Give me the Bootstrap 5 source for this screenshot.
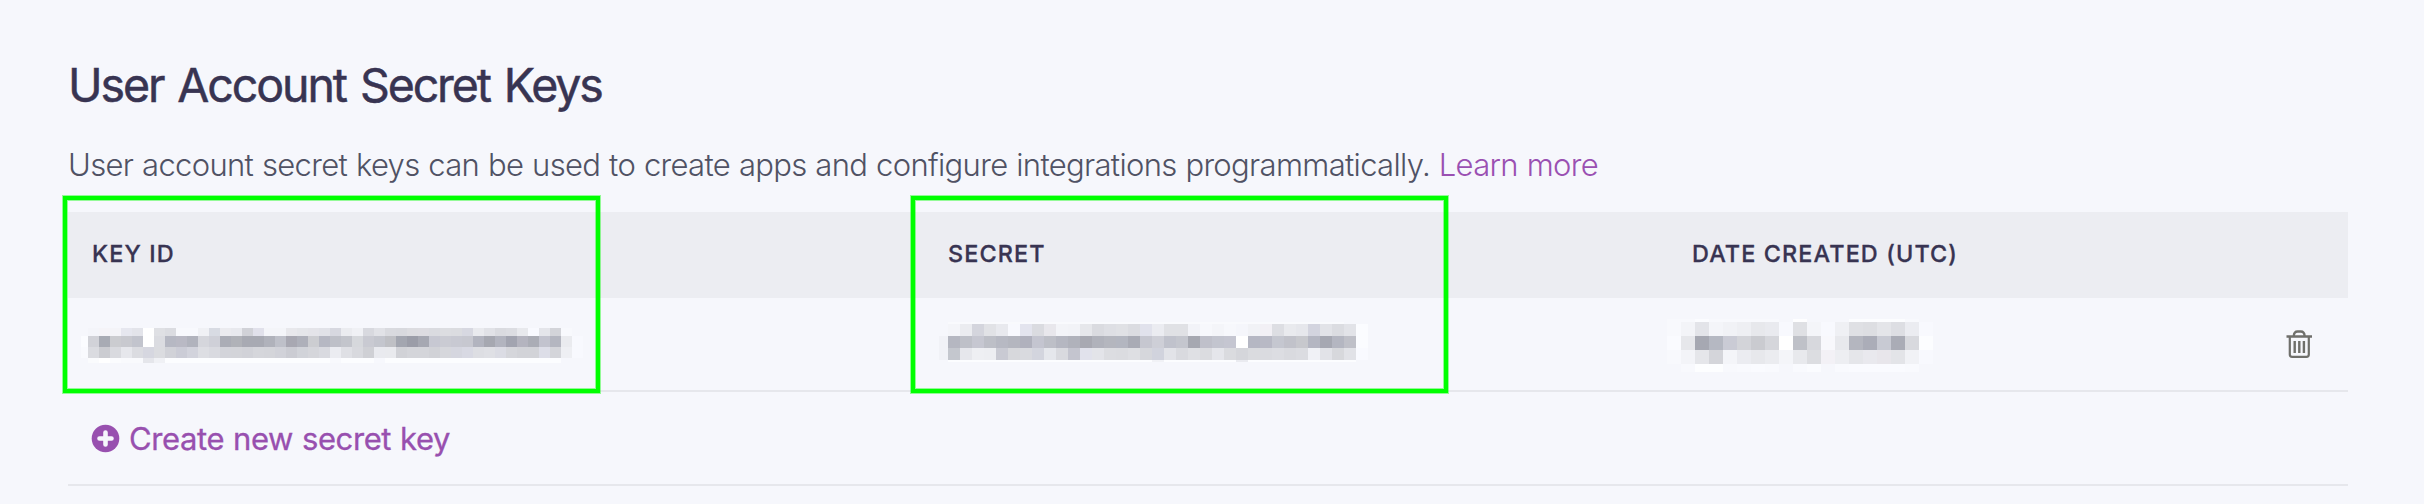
<!DOCTYPE html>
<html lang="en">
<head>
<meta charset="utf-8">
<title>User Account Secret Keys</title>
<link href="https://cdn.jsdelivr.net/npm/bootstrap@5.3.0/dist/css/bootstrap.min.css" rel="stylesheet">
<style>
body{background:#f6f7fc;color:#383452;font-family:Inter,"Liberation Sans",sans-serif;overflow:hidden;font-kerning:normal}
.page{padding:57px 76px 0 68px;height:504px}
.page-title{font-size:46.5px;line-height:56px;font-weight:400;letter-spacing:-2.1px;word-spacing:3px;white-space:nowrap;-webkit-text-stroke:.5px #383452}
.intro{font-size:31px;line-height:40px;font-weight:300;letter-spacing:-.67px;word-spacing:.75px;color:#505264;white-space:nowrap;margin:32px 0 27px}
.intro a{color:#9a50b2}
.keys{position:relative}
.keys-row{display:grid;grid-template-columns:856px 744px 572px 108px}
.keys-head{background:#ecedf2;height:86px;align-items:center;font-size:23.4px;font-weight:500;letter-spacing:1.12px;line-height:28px;-webkit-text-stroke:.3px #383452}
.keys-head>div{padding:0 0 2px 24px}
.keys-body{height:94px;border-bottom:2px solid #e6e7ec}
.keys-add{height:94px;border-bottom:2px solid #e6e7ec;padding-left:23px;gap:9px;color:#9850af;font-size:31px;line-height:40px;letter-spacing:-.4px;word-spacing:.6px;-webkit-text-stroke:.3px #9850af}
.keys-add span{padding-top:2px}
.mosaic{display:grid}
.m-key{grid-template-columns:7px repeat(45,11px);grid-template-rows:8px 11px 11px 5px;margin:30px 0 0 13px}
.m-secret{grid-template-columns:9px repeat(35,12px);grid-template-rows:2px 12px 12px 12px 2px;margin:24px 0 0 15px}
.m-date{grid-template-columns:repeat(19,14px);grid-template-rows:3px 14px 14px 14px 8px;margin:21px 0 0 -1px}
.frame{position:absolute;top:-16px;height:197px;border:4px solid #0f0;box-shadow:0 0 0 1px rgba(0,255,0,.4),inset 0 0 0 1px rgba(0,255,0,.4)}
.frame-key{left:-5px;width:537px}
.frame-secret{left:843px;width:537px}
.trash{margin:30px 0 0 45px}
</style>
</head>
<body>
<main class="page">
<h1 class="page-title mb-0">User Account Secret Keys</h1>
<p class="intro">User account secret keys can be used to create apps and configure integrations programmatically. <a href="#" class="text-decoration-none">Learn more</a></p>
<section class="keys">
<div class="keys-row keys-head"><div>KEY ID</div><div>SECRET</div><div>DATE CREATED (UTC)</div><div></div></div>
<div class="keys-row keys-body">
<div><div class="mosaic m-key" id="key"></div></div>
<div><div class="mosaic m-secret" id="secret"></div></div>
<div><div class="mosaic m-date" id="date"></div></div>
<div><svg class="d-block trash" width="28" height="32" viewBox="0 0 28 32" fill="none" stroke="#6f6f6b" stroke-width="2.2"><path d="M1.500 8.500H27M8.700 8C9 5 10.500 3.500 12.500 3.500h3.400c2 0 3.500 1.500 3.800 4.500" stroke-width="2.300"/><path d="M4.800 8.500V26.500q0 2.300 2.300 2.300H21.500q2.300 0 2.300-2.300V8.500"/><path d="M9.700 13v12M14.300 13v12M18.900 13v12" stroke-width="2.400"/></svg></div>
</div>
<div class="keys-add d-flex align-items-center">
<svg width="29" height="29" viewBox="0 0 29 29"><circle cx="14.500" cy="14.500" r="13.800" fill="#9850af"/><path d="M14.500 8.500v12M8.500 14.500h12" stroke="#f6f7fc" stroke-width="4.600" stroke-linecap="round"/></svg>
<span>Create new secret key</span>
</div>
<div class="frame frame-key"></div><div class="frame frame-secret"></div>
</section>
</main>
<script>
// redacted values: one string of colours per mosaic row
const B='f6f7fc';
const rep=(c,n)=>Array(n).fill(c).join(' ');
const data={
key:[
B+' f4f5fa f5f4f8 f4f4f8 e6e7ef e3e4ea ffffff dfe0e4 dbdce1 f8f9fd f8f9fd f0f1f5 d8dbe3 ebebef e8e9ee d1d2d8 e1e1eb f4f5f9 f4f5f9 e8e8ec e5e6ea e4e4e9 e1e2e8 d7d8e0 ebecf0 f0f1f5 d8d9df e1e2e7 d9dadf d8d9de dcdce0 dddce1 dadbe0 dcdde1 dbdce0 d7d8e1 e9eaee e1e2e7 dadbe0 dcdde2 e8e9ed f9faff e4e5ea d3d4d9 f8f9fd '+B,
'fbfcff d1d2d8 a8abb4 cbccd0 c8c9cf c2c4cd ffffff dbdce1 b6b8c3 b9b9c4 b1b3bd d5d6dc cfd0d8 abadb6 b0b2b8 a8aab3 a8aab3 b0b2bb bec0c9 a8a8b2 aeb0ba cccdd1 b6b8c3 bec0c8 c3c5cc d6d8dc c9cad2 c4c6ce bfc0c5 a3a6b0 9b9da8 a6a8b2 c7c8d2 cacbd3 c8c9d2 c7c8d0 b2b4bf a6a8b1 b2b4bf a2a4b0 b4b4bf abadb6 c2c3ce b4b6c0 eaebef f8f9fe',
'f9fafe dadbe0 cbccd1 d9dadf e6e7ec dbdce1 d6d7e0 dbdce0 d1d2d8 cbccd6 d2d3dc dddee3 d9dae0 d3d4da d3d4d9 d1d2d8 d5d6db d4d5da d1d2d9 cbccd3 d1d3d9 d5d6db d9dae0 ebecf1 dfe0e5 d8d9de cfd0d5 e9eaef e9eaee d1d2d7 d4d5da d4d5da d1d2d7 d6d7dc d5d6df d8d9e3 dddee3 dfe0e5 dbdce4 d5d6db d2d3d8 d2d3d8 dddee8 d4d5da eeeff3 f8f9fe',
B+' fafbfd ffffff fbfcfe f9fafd f9fafd e5e6eb f0f1f5 '+rep('fcfdff',15)+' f8f9fd '+rep('fcfdff',3)+' f7f8fd '+rep('fcfdff',16)+' '+B+' '+B],
secret:[
B+' '+rep('f9fafd',33)+' '+B+' '+B,
B+' f4f5f9 ebecf0 d4d5dd e1e2e6 e8e9ee f8f9fe e3e4ee dadbe0 e8e7ec f3f4f8 f2f3f7 e6e7eb dadbe0 dedfe4 e0e1e5 dbdce1 e1e2ec ebecf1 e0e1e5 e0e1e5 f2f3f8 f7f8fc f4f5f9 f7f8fc f5f6fb f1f2f6 f2f0f5 dddee3 e9eaee e6e7ec d3d4df e2e3e8 dbdce1 e2e3e8 fbfcff',
'f1f2f7 b5b7c1 bec0c8 c6c7d1 bdbfc7 b7b9c3 b4b6bf b0b1bd c4c5d0 bdbfc7 b5b7c1 b0b2bb a8a9b2 b0b2bb b4b6be b3b6c0 a9abb5 c6c7d0 cecfd7 c0c2cc c4c6ce a6a8b1 bfc0ca c3c5cf c5c6d1 ffffff b5b7c3 b8b9c5 c5c7d0 c1c2ca c7c8cd b4b6c2 a6a8b2 b4b6c1 bfc0c8 fbfcff',
'f1f2f7 c4c7ce e6e7ec eeeff3 edeef2 c9cad3 d7d8dc d9dadf d3d5de e5e7ec d9dadf c4c5cf e1e2ec e3e4e9 dcdde1 dbdce0 dedfe3 d6d7dc d1d3dd e2e3e8 d9dadf dfe0e4 dbdce0 e5e6eb dadbdf d5d6db dadbdf dadbe0 dcdde2 d9dadf dbdce1 f0f1f6 e2e3e8 d7d8dc e1e2e7 f9faff',
B+' '+rep('fcfdff',17)+' f1f2f6 '+rep('fcfdff',6)+' eaebf0 '+rep('fcfdff',9)+' '+B],
date:[
rep('f8f9fd',2)+' fbfcff '+rep('f8f9fd',5)+' '+B+' fefeff '+B+' '+B+' '+B+' '+rep('fcfdff',4)+' f8f9fd '+B,
'f8f9fd f3f4f8 e3e4e9 f4f5f9 f1f2f6 eeeff3 e7e8ec e9eaef f8f9fe dfe0e4 f4f5f9 f8f9fe eff0f4 dfe0e4 dddee2 e4e5e9 dddee3 ebecf1 f8f9fe',
'fafbff e6e7eb a6a8b2 b5b8c2 cacbd5 d3d4d9 cacbd0 d5d6db ffffff bfc1c8 d7d8dd f8f8fc e8e9ed b4b6bf abadb8 c8cad3 aaacb6 d8d9de fcfdff',
'f8f9fd f3f4f8 e5e6ea d4d5da f4f5f9 ebecf1 e7e8ec ebecf0 f4f5f9 e8e9ed dcdde1 f3f1f6 edeef2 e5e6ea e9e9ee e8e6eb e3e4e8 f1f2f6 f8f9fe',
B+' f8f9fd fdfeff fdfeff f8f9fd f9fafe fafbff f9fafe '+B+' f9fafe fbfcff '+B+' f9fafe fafbff fafbff fafbff fafbff f9fafe '+B]
};
for(const id in data){
  const el=document.getElementById(id);
  data[id].forEach(r=>r.split(' ').forEach(c=>{const s=document.createElement('span');s.style.background='#'+c;el.append(s)}));
}
</script>
<script src="https://cdn.jsdelivr.net/npm/bootstrap@5.3.0/dist/js/bootstrap.bundle.min.js"></script>
</body>
</html>
